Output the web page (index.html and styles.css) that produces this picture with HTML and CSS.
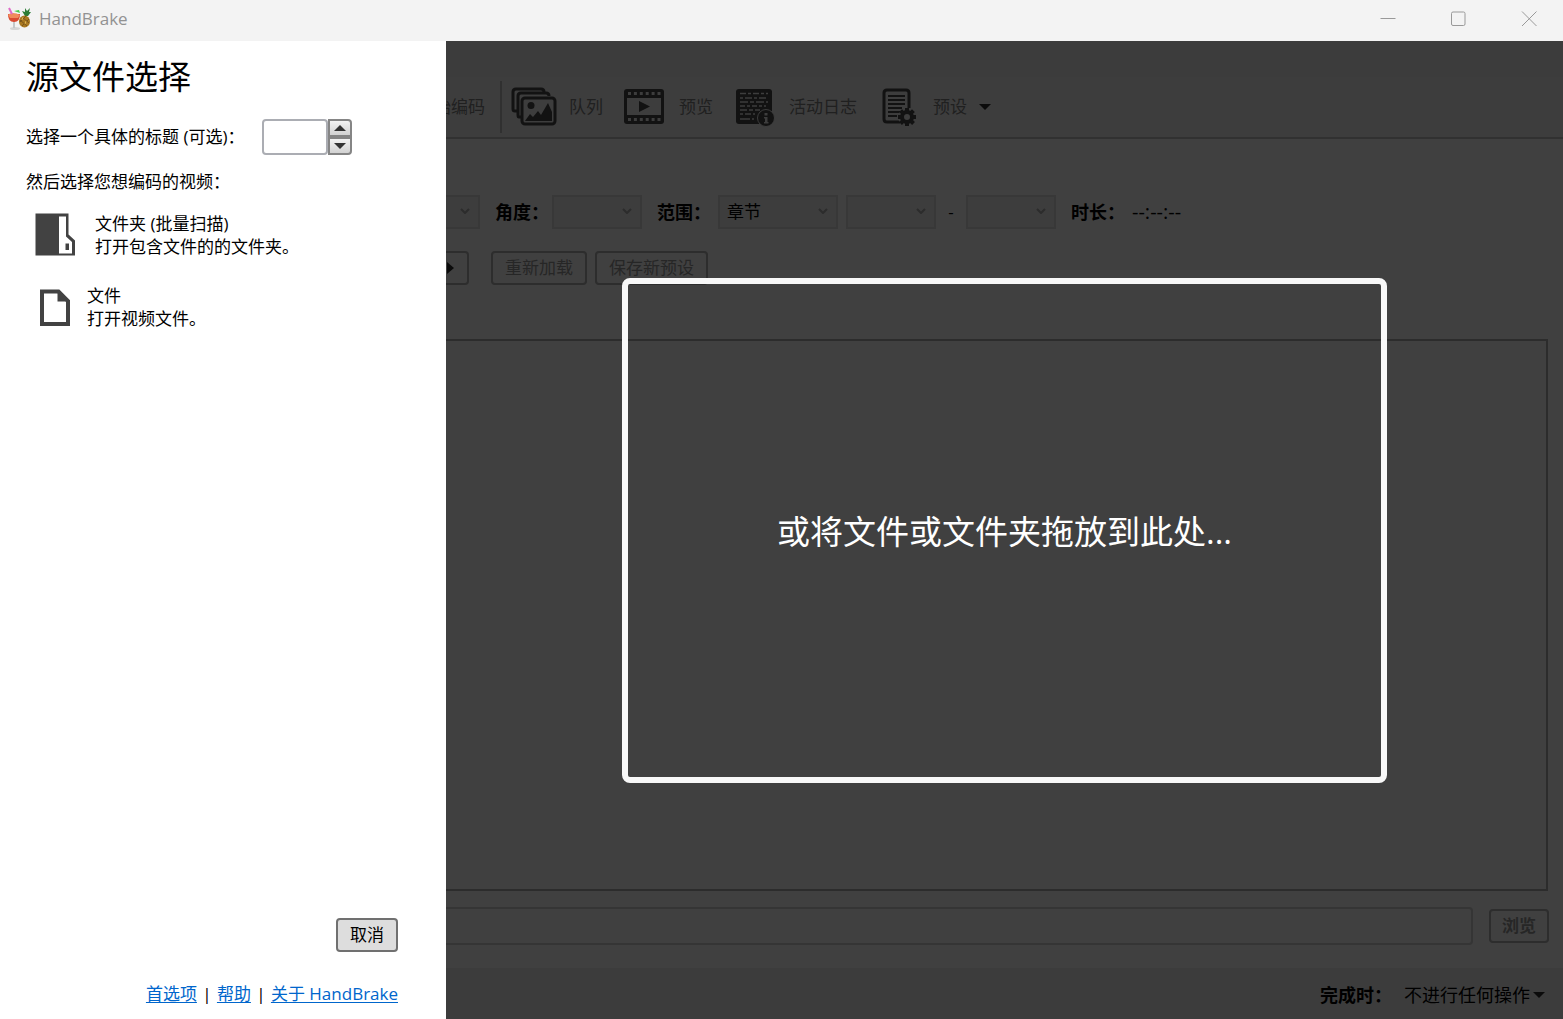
FILE: index.html
```html
<!DOCTYPE html>
<html lang="zh-CN">
<head>
<meta charset="utf-8">
<meta name="viewport" content="width=device-width, initial-scale=1">
<title>HandBrake</title>
<link rel="stylesheet" href="styles.css">
</head>
<body>
<header class="titlebar">
  <svg class="app-icon" width="24" height="24" viewBox="0 0 24 24" aria-hidden="true">
    <ellipse cx="8" cy="21.500" rx="5" ry="1.500" fill="#d5d5d5"/>
    <path d="M7 13v8" stroke="#c4c8ca" stroke-width="2"/>
    <path d="M1 7h12c0 5-2 8-6 8S1 12 1 7z" fill="#d94a32"/>
    <path d="M1 8c3-3 8-2 12 0l-2 3H3z" fill="#f08a5c"/>
    <path d="M2 1l3 6" stroke="#e06ac8" stroke-width="2"/>
    <path d="M7 4l5-1 1 3z" fill="#48c94e"/>
    <path d="M18 9l-3-5 3 1 0-4 2 3 3-3-1 4 2 0-3 4z" fill="#2c7d35"/>
    <ellipse cx="17.500" cy="14.500" rx="5.500" ry="6" fill="#a9781f"/>
    <path d="M13 13l7 6M15 10l7 6M22 12l-7 7M19 9l-6 6" stroke="#7a5518" stroke-width="1"/>
    <path d="M16 10l-1 3M19 14l-1 3" stroke="#e1b650"/>
  </svg>
  <span class="title">HandBrake</span>
  <div class="window-controls">
    <button type="button" aria-label="最小化"><svg width="16" height="16" viewBox="0 0 16 16"><path d="M.5 7.500h15"/></svg></button>
    <button type="button" aria-label="最大化"><svg width="16" height="16" viewBox="0 0 16 16"><rect x="1.500" y="1" width="13.500" height="13.500" rx="1.500"/></svg></button>
    <button type="button" aria-label="关闭"><svg width="16" height="16" viewBox="0 0 16 16"><path d="M1 .5l14.500 14.500M15.500 .5L1 15"/></svg></button>
  </div>
</header>
<div class="content">
  <aside class="source-panel">
    <h1>源文件选择</h1>
    <div class="title-row">
      <label for="title-number">选择一个具体的标题 (可选)：</label>
      <div class="spinner">
        <input id="title-number" type="text">
        <div class="spin-buttons">
          <button type="button" aria-label="增加"><svg width="12" height="6" viewBox="0 0 12 6"><path d="M0 6l6-6 6 6z"/></svg></button>
          <button type="button" aria-label="减少"><svg width="12" height="6" viewBox="0 0 12 6"><path d="M0 0l6 6 6-6z"/></svg></button>
        </div>
      </div>
    </div>
    <p class="hint">然后选择您想编码的视频：</p>
    <button type="button" class="source-option folder">
      <svg width="42" height="44" viewBox="0 0 42 44" aria-hidden="true"><path d="M.5 .5h33v21l6.500 6v15H.5z" fill="#424242"/><path d="M24 3.500h7v20l6 5.500v11.500H24z" fill="#fff"/><path d="M30.500 30.500h3.500v6.500h-3.500z" fill="#424242"/></svg>
      <span>文件夹 (批量扫描)<br>打开包含文件的的文件夹。</span>
    </button>
    <button type="button" class="source-option file">
      <svg width="32" height="38" viewBox="0 0 32 38" aria-hidden="true"><path d="M3 3.500h16.500L29 13V36H3z" fill="#fff" stroke="#424242" stroke-width="4"/><path d="M18.500 2v11.500h11.500z" fill="#424242"/></svg>
      <span>文件<br>打开视频文件。</span>
    </button>
    <div class="panel-footer">
      <button type="button" class="cancel">取消</button>
      <nav class="links"><a href="#preferences">首选项</a><span>|</span><a href="#help">帮助</a><span>|</span><a href="#about">关于 HandBrake</a></nav>
    </div>
  </aside>
  <main class="workspace">
    <div class="menu-strip"></div>
    <div class="toolbar">
      <button type="button" class="tool clipped"><span>开始编码</span></button>
      <div class="separator"></div>
      <button type="button" class="tool">
        <svg width="46" height="40" viewBox="0 0 46 40" aria-hidden="true">
          <g fill="none" stroke="#121212" stroke-width="3" stroke-linejoin="round"><path d="M6 24H4q-2 0-2-2V5q0-3 3-3h25q3 0 3 3"/><path d="M10 30H8q-1 0-1-2V9q0-3 3-3h25q3 0 3 3"/></g>
          <rect x="11" y="11" width="33" height="26" rx="3" fill="#3d3d3d" stroke="#121212" stroke-width="3"/>
          <circle cx="20" cy="18.500" r="3.500" fill="#121212"/><path d="M14 34l5-7 3 3 5-6 3 4 7-12 4 9v9z" fill="#121212"/>
        </svg><span>队列</span>
      </button>
      <button type="button" class="tool">
        <svg width="46" height="40" viewBox="0 0 46 40" aria-hidden="true">
          <rect x="3" y="2" width="40" height="35" rx="3" fill="#121212"/><rect x="6" y="11" width="34" height="17" fill="#3d3d3d"/><path d="M18 14v11l11-5.500z" fill="#121212"/>
          <path d="M7 6.500h33M7 32.500h33" stroke="#3d3d3d" stroke-width="3" stroke-dasharray="3 2.900"/>
        </svg><span>预览</span>
      </button>
      <button type="button" class="tool">
        <svg width="46" height="40" viewBox="0 0 46 40" aria-hidden="true">
          <rect x="5" y="2" width="36" height="35" rx="3" fill="#121212"/>
          <g fill="none" stroke="#3d3d3d" stroke-width="1.500"><path d="M9 6.500h28" stroke-dasharray="6 2 3 2"/><path d="M9 11h28" stroke-dasharray="3 2 7 2"/><path d="M9 15h28" stroke-dasharray="8 2 4 2"/><path d="M9 19h26" stroke-dasharray="5 2 3 2"/><path d="M9 23h20" stroke-dasharray="7 2 4 2"/><path d="M9 27h15" stroke-dasharray="3 2 6 2"/><path d="M9 32h14" stroke-dasharray="10 2"/></g>
          <circle cx="35" cy="31" r="8.500" fill="#121212" stroke="#3d3d3d"/><path d="M33.500 26h3v2.500h-3zM33 30h3.500v5h1v1.500H33V35h1v-3.500h-1z" fill="#3d3d3d"/>
        </svg><span>活动日志</span>
      </button>
      <button type="button" class="tool">
        <svg width="46" height="40" viewBox="0 0 46 40" aria-hidden="true">
          <path d="M34 21V6q0-3-3-3H12q-3 0-3 3v26q0 3 3 3h13" fill="none" stroke="#121212" stroke-width="3"/>
          <path d="M13 9h17M13 13h17M13 17h17M13 21h14M13 25h12M13 29h9" stroke="#121212" stroke-width="2"/>
          <circle cx="32" cy="30" r="9" fill="#3d3d3d"/>
          <circle cx="32" cy="30" r="5" fill="none" stroke="#121212" stroke-width="4"/>
          <path d="M32 21v4M32 35v4M23 30h4M37 30h4M25.600 23.600l3 3M35.500 33.500l3 3M38.400 23.600l-3 3M28.500 33.500l-3 3" stroke="#121212" stroke-width="4"/>
        </svg><span>预设</span>
        <svg width="12" height="6" viewBox="0 0 12 6" aria-hidden="true"><path d="M0 0h12L6 6z" fill="#0b0b0b"/></svg>
      </button>
    </div>
    <div class="source-row">
      <div class="select edge"><select aria-label="标题" disabled><option></option></select><svg width="10" height="6" viewBox="0 0 10 6"><path d="M1 1l4 4 4-4"/></svg></div>
      <label class="angle" for="angle">角度：</label>
      <div class="select"><select id="angle" disabled><option></option></select><svg width="10" height="6" viewBox="0 0 10 6"><path d="M1 1l4 4 4-4"/></svg></div>
      <label for="range">范围：</label>
      <div class="select wide"><select id="range" disabled><option>章节</option></select><svg width="10" height="6" viewBox="0 0 10 6"><path d="M1 1l4 4 4-4"/></svg></div>
      <div class="select next"><select aria-label="起始章节" disabled><option></option></select><svg width="10" height="6" viewBox="0 0 10 6"><path d="M1 1l4 4 4-4"/></svg></div>
      <span class="dash">-</span>
      <div class="select"><select aria-label="结束章节" disabled><option></option></select><svg width="10" height="6" viewBox="0 0 10 6"><path d="M1 1l4 4 4-4"/></svg></div>
      <b>时长：</b>
      <span class="duration">--:--:--</span>
    </div>
    <div class="preset-row">
      <button type="button" class="outlined preset-picker" aria-label="选择预设"><svg width="8" height="12" viewBox="0 0 8 12"><path d="M1 0l7 6-7 6z" fill="#0b0b0b"/></svg></button>
      <button type="button" class="outlined" disabled>重新加载</button>
      <button type="button" class="outlined" disabled>保存新预设</button>
    </div>
    <section class="tab-area"></section>
    <div class="destination">
      <input type="text" aria-label="另存为" disabled>
      <button type="button" class="outlined browse" disabled>浏览</button>
    </div>
    <footer class="status">
      <b>完成时：</b>
      <button type="button">不进行任何操作 <svg width="12" height="6" viewBox="0 0 12 6" aria-hidden="true"><path d="M0 0h12L6 6z" fill="#0b0b0b"/></svg></button>
    </footer>
    <div class="drop-layer"><div class="drop-zone">或将文件或文件夹拖放到此处...</div></div>
  </main>
</div>
</body>
</html>
```
FILE: styles.css
```css
* { box-sizing: border-box; }

body {
  margin: 0;
  min-height: 100vh;
  display: flex;
  flex-direction: column;
  font: 17px/24px "Open Sans", "Noto Sans CJK SC", sans-serif;
  color: #000;
  background: #404040;
}

button, input, select { font: inherit; color: inherit; margin: 0; }
button { padding: 0; border: 0; background: none; }
svg { display: block; flex: none; }

.titlebar {
  height: 41px;
  display: flex;
  align-items: center;
  padding: 0 4px 4px 7px;
  background: #f3f3f3;
  color: #929292;
}
.title { margin-left: 8px; }
.window-controls { margin-left: auto; display: flex; }
.window-controls button { width: 70px; height: 36px; display: grid; place-items: center; }
.window-controls button:last-child { width: 60px; margin-left: 6px; }
.window-controls svg { fill: none; stroke: #999; }

.content { flex: 1; display: flex; }

.source-panel {
  width: 446px;
  flex: none;
  display: flex;
  flex-direction: column;
  align-items: flex-start;
  padding: 14px 48px 13px 26px;
  background: #fff;
}
h1 { margin: 0; font-size: 33px; line-height: 44px; font-weight: 400; }
.title-row { display: flex; align-items: center; margin-top: 20px; }
.title-row label { width: 236px; white-space: nowrap; }
.spinner { display: flex; height: 36px; }
.spinner input {
  width: 66px;
  padding: 0 6px;
  border: 2px solid #abadb3;
  border-radius: 4px;
  background: #fff;
}
.spin-buttons { width: 24px; display: grid; grid-template-rows: 1fr 1fr; }
.spin-buttons button {
  display: grid;
  place-items: center;
  border: 2px solid #858585;
  background: linear-gradient(#f3f3f3, #d2d2d2);
}
.spin-buttons button:first-child { border-top-right-radius: 4px; }
.spin-buttons button:last-child { border-bottom-right-radius: 4px; }
.spin-buttons svg { fill: #333; }
.hint { margin: 15px 0 0; }
.source-option { display: flex; align-items: center; text-align: left; line-height: 23px; }
.folder { margin: 18px 0 0 9px; gap: 18px; }
.file { margin: 26px 0 0 13px; gap: 16px; }
.panel-footer { align-self: stretch; margin-top: auto; display: flex; flex-direction: column; align-items: flex-end; gap: 30px; }
.cancel { width: 62px; height: 34px; border: 2px solid #707070; border-radius: 4px; background: #ddd; }
.links { display: flex; }
.links span { width: 20px; text-align: center; }
.links a { color: #0066cc; text-underline-offset: 2px; text-decoration-thickness: 1px; }

.workspace { position: relative; flex: 1; min-width: 0; display: flex; flex-direction: column; }
.menu-strip { height: 36px; background: #3c3c3c; }
.toolbar {
  height: 62px;
  display: flex;
  align-items: center;
  gap: 18px;
  border-bottom: 2px solid #313131;
  background: #3d3d3d;
  color: #202020;
}
.tool { display: flex; align-items: center; gap: 12px; white-space: nowrap; }
.tool.clipped { width: 39px; overflow: hidden; justify-content: flex-end; }
.separator { width: 2px; height: 52px; margin: 0 -9px 0 -3px; background: #303030; }

.source-row { display: flex; align-items: center; height: 34px; margin-top: 56px; }
.source-row label, .source-row b { font-size: 18px; font-weight: 700; margin: 0 7px 0 15px; white-space: nowrap; }
.source-row .angle { margin-right: 3px; }
.select { width: 90px; height: 34px; display: grid; align-items: center; }
.select > * { grid-area: 1 / 1; }
.select select {
  width: 100%;
  height: 34px;
  padding: 0 7px;
  appearance: none;
  border: 2px solid #383838;
  border-radius: 0;
  background: #3d3d3d;
  opacity: 1;
}
.select svg { justify-self: end; margin: 0 10px 2px 0; fill: none; stroke: #2c2c2c; stroke-width: 2; pointer-events: none; }
.select.wide { width: 120px; }
.select.edge { width: 34px; }
.select.edge select { border-left: 0; }
.select.next { margin-left: 8px; }
.dash { width: 30px; text-align: center; }
.duration { font-size: 20px; }

.preset-row { display: flex; gap: 8px; margin-top: 22px; }
.outlined { height: 34px; padding: 0 12px; border: 2px solid #2d2d2d; border-radius: 4px; color: #262626; white-space: nowrap; }
.preset-picker { width: 23px; padding: 0; margin-right: 14px; border-left: 0; border-radius: 0 4px 4px 0; }

.tab-area { flex: 1; min-height: 200px; margin: 54px 15px 0 0; border: 2px solid #2c2c2c; border-left: 0; }
.destination { display: flex; align-items: center; gap: 16px; margin: 16px 14px 0 0; }
.destination input { flex: 1; min-width: 0; height: 38px; border: 2px solid #353535; border-left: 0; border-radius: 0 4px 4px 0; background: #404040; }
.browse { width: 60px; padding: 0; font-weight: 700; }

.status {
  height: 51px;
  margin-top: 23px;
  padding: 2px 18px 0 0;
  display: flex;
  align-items: center;
  justify-content: flex-end;
  gap: 12px;
  background: #3c3c3c;
  font-size: 18px;
}
.status button { display: flex; align-items: center; gap: 3px; }

.drop-layer { position: absolute; inset: 0; display: grid; place-items: center; }
.drop-zone {
  width: 765px;
  max-width: 90%;
  height: 505px;
  max-height: 90%;
  display: grid;
  place-items: center;
  padding-top: 4px;
  border: 6px solid #f8f8f8;
  border-radius: 8px;
  color: #fff;
  font-size: 33px;
  line-height: 44px;
}
```
